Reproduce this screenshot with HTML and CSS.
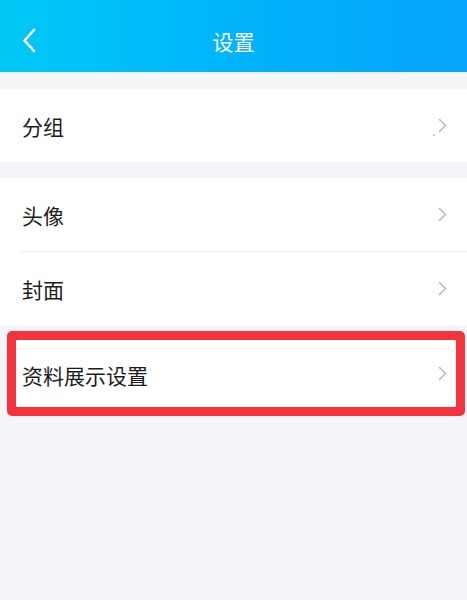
FILE: index.html
```html
<!DOCTYPE html>
<html lang="zh">
<head>
<meta charset="utf-8">
<link rel="stylesheet" href="styles.css">
</head>
<body>
<div class="page">
  <header class="topbar">
    <svg class="back" width="14" height="25" viewBox="0 0 14 25"><path d="M12 2 L2.5 12.5 L12 23" fill="none" stroke="#fff" stroke-width="2.6" stroke-linecap="round" stroke-linejoin="round"/></svg>
    <div class="title">设置</div>
  </header>
  <section class="group g1">
    <div class="row">
      <span class="label">分组</span>
      <span class="right"><span class="dot">.</span><svg class="chev" width="9" height="15" viewBox="0 0 9 15"><path d="M1.5 1.5 L7.5 7.5 L1.5 13.5" fill="none" stroke="#b9bac2" stroke-width="1.6" stroke-linecap="round" stroke-linejoin="round"/></svg></span>
    </div>
  </section>
  <section class="group g2">
    <div class="row">
      <span class="label">头像</span>
      <svg class="chev" width="9" height="15" viewBox="0 0 9 15"><path d="M1.5 1.5 L7.5 7.5 L1.5 13.5" fill="none" stroke="#b9bac2" stroke-width="1.6" stroke-linecap="round" stroke-linejoin="round"/></svg>
    </div>
    <div class="divider"></div>
    <div class="row">
      <span class="label">封面</span>
      <svg class="chev" width="9" height="15" viewBox="0 0 9 15"><path d="M1.5 1.5 L7.5 7.5 L1.5 13.5" fill="none" stroke="#b9bac2" stroke-width="1.6" stroke-linecap="round" stroke-linejoin="round"/></svg>
    </div>
  </section>
  <section class="group g3">
    <div class="row hl">
      <span class="label">资料展示设置</span>
      <svg class="chev" width="9" height="15" viewBox="0 0 9 15"><path d="M1.5 1.5 L7.5 7.5 L1.5 13.5" fill="none" stroke="#b9bac2" stroke-width="1.6" stroke-linecap="round" stroke-linejoin="round"/></svg>
    </div>
  </section>
</div>
</body>
</html>
```
FILE: styles.css
```css
html, body {
  margin: 0;
  padding: 0;
  background: #f4f5f9;
}
body {
  font-family: "Noto Sans CJK SC", "Noto Sans", sans-serif;
  width: 467px;
  height: 600px;
  overflow: hidden;
}
.page {
  display: flex;
  flex-direction: column;
}
.topbar {
  height: 73px;
  padding-top: 10px;
  background: linear-gradient(90deg, #00c9f6 0%, #00b6fb 45%, #06a4fc 100%);
  display: flex;
  align-items: center;
  justify-content: center;
  position: relative;
  border-bottom: 1px solid #e9f3fb;
  box-sizing: border-box;
}
.back {
  position: absolute;
  left: 22px;
  top: 28px;
}
.title {
  color: #fff;
  font-size: 21px;
  line-height: 26px;
}
.group {
  background: #fff;
  display: flex;
  flex-direction: column;
}
.g1 {
  margin-top: 16px;
}
.g2 {
  margin-top: 16px;
}
.row {
  height: 73px;
  display: flex;
  align-items: center;
  justify-content: space-between;
  padding: 0 20px 0 22px;
}
.label {
  font-size: 21px;
  color: #1c1c21;
  line-height: 28px;
}
.right {
  display: flex;
  align-items: center;
  gap: 2px;
}
.dot {
  color: #b9bac2;
  font-size: 14px;
  line-height: 14px;
  margin-top: 8px;
}
.chev {
  display: block;
}
.divider {
  height: 1px;
  background: #ededf1;
  margin-left: 20px;
}
.g3 {
  margin: 6px 2px 0 7px;
  border: 9px solid #f5333a;
  border-radius: 5px;
}
.row.hl {
  height: 67px;
  padding: 0 9px 0 6px;
}
.row.hl .label {
  margin-top: 2px;
}
```
